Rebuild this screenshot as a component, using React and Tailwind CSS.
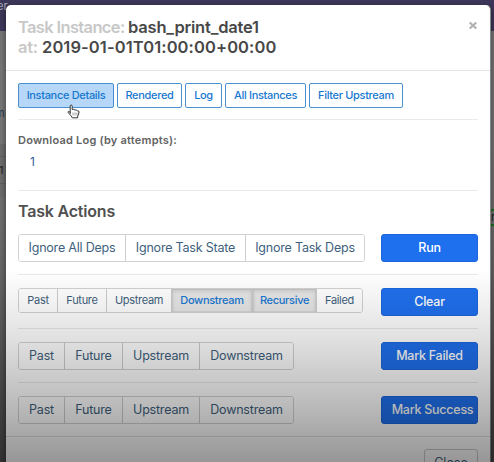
import React from 'react';

const LINK_BTN = 'flex h-[25px] shrink-0 items-center justify-center whitespace-nowrap rounded-[2px] border border-[#4a8fd0] text-[11px] font-medium tracking-[-0.32px] text-[#1878cf]';
const PRIMARY = 'flex h-[28px] w-[97px] shrink-0 items-center justify-center whitespace-nowrap rounded-[3px] border border-[#1b66dc] bg-[#1f70ee] text-[12.5px] font-medium tracking-[-0.25px] text-white';

function Group({ items, small }) {
  return (
    <div className={`flex overflow-hidden rounded-[3px] border border-[#d2d2d2] ${small ? 'h-[25px] text-[11px] tracking-[-0.3px]' : 'h-[28px] text-[12.5px] tracking-[-0.2px]'}`}>
      {items.map(([label, size, active], i) => (
        <div
          key={label}
          className={`flex items-center justify-center whitespace-nowrap ${i ? 'border-l border-[#cccccc]' : ''} ${size} ${active ? 'bg-[#e6e6e6] font-medium text-[#1878d2] shadow-[inset_0_2px_4px_rgba(0,0,0,0.13),inset_0_0_0_1px_rgba(0,0,0,0.05)]' : 'bg-white text-[#3e5f7d]'}`}
        >
          {label}
        </div>
      ))}
    </div>
  );
}

function Row({ children, last }) {
  return (
    <div className={`flex items-start justify-between ${last ? 'h-[40px]' : 'mb-[13px] h-[41px] border-b border-[#e8e8e8]'}`}>
      {children}
    </div>
  );
}

const markItems = [
  ['Past', 'w-[45px]'],
  ['Future', 'w-[58px]'],
  ['Upstream', 'w-[77px]'],
  ['Downstream', 'w-[94px]'],
];

export default function App() {
  return (
    <div className="relative h-[462px] w-[494px] overflow-hidden bg-[linear-gradient(to_bottom,#777777_30%,#5e5e5e_75%,#555555_100%)] font-['Inter','Liberation_Sans',sans-serif]">
      <div className="h-[31px] bg-[#3d3859]" />
      <span className="absolute left-[-3px] top-[-1px] text-[11px] leading-[14px] text-[#aaa8b8]">er</span>
      <span className="absolute left-[-5px] top-[106px] text-[11px] leading-[14px] text-[#29384a]">m</span>
      <div className="absolute left-[-10px] top-[144px] h-[53px] w-[20px] bg-[#6c6c6c]" />
      <div className="absolute left-[-9px] top-[156px] h-[28px] w-[20px] border border-[#606060] pt-[6px] text-[11px] leading-[14px] text-[#222222]">01</div>
      <div className="absolute left-[489px] top-[209px] h-[17px] w-[12px] border-2 border-[#1c701c] text-[11px] leading-[13px] text-[#222222]">r</div>

      <div className="absolute left-[6px] top-[5px] h-[500px] w-[485px] rounded-[5px] border-r border-[#888888] bg-white shadow-[0_2px_6px_rgba(0,0,0,0.5)]">
        <div className="flex h-[66px] justify-between border-b border-[#e5e5e5] pl-[12px] pr-[13px] pt-[12px]">
          <h4 className="text-[16.5px] font-semibold leading-[20px] text-[#484848]">
            <div className="flex gap-[5px]">
              <span className="w-[105px] whitespace-nowrap tracking-[-0.65px] text-[#c8c8c8]">Task Instance:</span>
              <span className="whitespace-nowrap tracking-[-0.2px]">bash_print_date1</span>
            </div>
            <div className="flex gap-[5px]">
              <span className="w-[19px] whitespace-nowrap tracking-[-0.3px] text-[#c8c8c8]">at:</span>
              <span className="whitespace-nowrap tracking-[0.1px]">2019-01-01T01:00:00+00:00</span>
            </div>
          </h4>
          <svg className="mt-[5px] h-[7px] w-[8px]" viewBox="0 0 8 7" stroke="#b2b2b2" strokeWidth="2.1">
            <path d="M.7.4 7.3 6.6M7.3.4.7 6.6" />
          </svg>
        </div>

        <div className="px-[12px] pt-[12px]">
          <div className="flex h-[37px] gap-[3px] border-b border-[#eaeaea]">
            <div className={`${LINK_BTN} w-[96px] bg-[#b6d7f8]`}>Instance Details</div>
            <div className={`${LINK_BTN} w-[65px]`}>Rendered</div>
            <div className={`${LINK_BTN} w-[37px]`}>Log</div>
            <div className={`${LINK_BTN} w-[81px]`}>All Instances</div>
            <div className={`${LINK_BTN} w-[94px]`}>Filter Upstream</div>
          </div>
          <div className="h-[71px] border-b border-[#eaeaea] pt-[13px]">
            <div className="whitespace-nowrap text-[11px] font-semibold leading-[14px] tracking-[0.22px] text-[#636363]">Download Log (by attempts):</div>
            <div className="ml-[12px] mt-[8px] text-[12px] leading-[14px] text-[#2f6299]">1</div>
          </div>
          <h4 className="h-[43px] pt-[10px] text-[16px] font-semibold leading-[20px] tracking-[-0.2px] text-[#505050]">Task Actions</h4>

          <Row>
            <Group items={[
              ['Ignore All Deps', 'w-[106px]'],
              ['Ignore Task State', 'w-[120px]'],
              ['Ignore Task Deps', 'w-[119px]'],
            ]} />
            <div className={PRIMARY}>Run</div>
          </Row>
          <Row>
            <Group small items={[
              ['Past', 'w-[38px]'],
              ['Future', 'w-[49px]'],
              ['Upstream', 'w-[65px]'],
              ['Downstream', 'w-[81px]', true],
              ['Recursive', 'w-[64px]', true],
              ['Failed', 'w-[46px]'],
            ]} />
            <div className={PRIMARY}>Clear</div>
          </Row>
          <Row>
            <Group items={markItems} />
            <div className={PRIMARY}>Mark Failed</div>
          </Row>
          <Row last>
            <Group items={markItems} />
            <div className={PRIMARY}><span className="ml-[6px]">Mark Success</span></div>
          </Row>
        </div>
        <div className="flex justify-end border-t border-[#e0e0e0] pr-[12px] pt-[12px]">
          <div className="flex h-[28px] w-[54px] items-center justify-center rounded-[3px] border border-[#cccccc] text-[12.5px] text-[#3e5f7d]">Close</div>
        </div>
      </div>

      <svg className="absolute left-[67px] top-[104px] h-[15px] w-[13px]" viewBox="0 0 13 15">
        <path d="M3.2 9.5V2.2q0-1.2 1-1.2t1 1.2v3.4q1.4-.7 1.8.3 1.4-.6 1.8.4 1.2-.5 1.7.5 1.5-.2 1.5 1.2 0 2.2-1.3 4v1.8H5.3L4 11.6 1.2 8.8Q.6 7.6 1.6 7.4q.8 0 1.6 1z" fill="#fff" stroke="#333" strokeWidth="1" />
        <path d="M6 8.5v3M8 8.5v3M10 8.5v3" stroke="#777" strokeWidth=".7" />
      </svg>
      <div className="pointer-events-none absolute inset-x-0 bottom-0 h-[192px] bg-[linear-gradient(to_bottom,rgba(0,0,0,0)_0%,rgba(0,0,0,0.12)_36%,rgba(0,0,0,0.26)_68%,rgba(0,0,0,0.41)_100%)]" />
    </div>
  );
}
